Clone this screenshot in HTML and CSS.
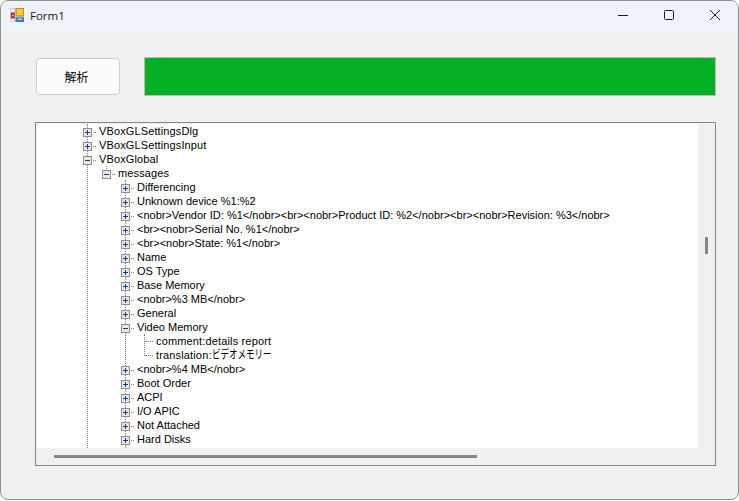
FILE: index.html
```html
<!DOCTYPE html>
<html lang="ja">
<head>
<meta charset="utf-8">
<title>Form1</title>
<link rel="stylesheet" href="styles.css">
</head>
<body>
<div class="window">
  <header class="titlebar">
    <svg class="app-icon" width="14" height="14" viewBox="0 0 15 15">
      <rect x="0" y="0" width="15" height="15" fill="#d0d0d0"/>
      <rect x="1" y="1" width="3" height="3" fill="#f4f4f4"/>
      <rect x="1" y="12" width="3" height="2" fill="#f4f4f4"/>
      <rect x="1" y="5" width="4" height="6" fill="#a81c1c"/>
      <rect x="2" y="7" width="2" height="2" fill="#f0b0a0"/>
      <rect x="6" y="0" width="9" height="9" fill="#b98a1e"/>
      <rect x="7" y="1" width="7" height="7" fill="#f6c93c"/>
      <rect x="6" y="10" width="9" height="5" fill="#3d74c6"/>
      <rect x="8" y="11" width="5" height="2" fill="#9cc2ee"/>
    </svg>
    <span class="title">Form1</span>
    <div class="caption-buttons">
      <svg width="12" height="12" viewBox="0 0 12 12"><path d="M1 6.5h10" stroke="#1a1a1a" fill="none"/></svg>
      <svg width="12" height="12" viewBox="0 0 12 12"><rect x="1.5" y="1.5" width="9" height="9" rx="1" stroke="#1a1a1a" fill="none"/></svg>
      <svg width="12" height="12" viewBox="0 0 12 12"><path d="M1 1l10 10M11 1L1 11" stroke="#1a1a1a" fill="none"/></svg>
    </div>
  </header>
  <main class="client">
    <div class="toolbar">
      <button class="analyze">解析</button>
      <div class="progress"></div>
    </div>
    <div class="treeview">
      <div class="tree-pane">
        <ul class="nodes top">
          <li><div class="row"><span class="box plus"></span><span class="dash"></span><span class="label">VBoxGLSettingsDlg</span></div></li>
          <li><div class="row"><span class="box plus"></span><span class="dash"></span><span class="label">VBoxGLSettingsInput</span></div></li>
          <li>
            <div class="row"><span class="box minus"></span><span class="dash"></span><span class="label">VBoxGlobal</span></div>
            <ul class="nodes single">
              <li>
                <div class="row"><span class="box minus"></span><span class="dash"></span><span class="label">messages</span></div>
                <ul class="nodes long">
                  <li><div class="row"><span class="box plus"></span><span class="dash"></span><span class="label">Differencing</span></div></li>
                  <li><div class="row"><span class="box plus"></span><span class="dash"></span><span class="label">Unknown device %1:%2</span></div></li>
                  <li><div class="row"><span class="box plus"></span><span class="dash"></span><span class="label">&lt;nobr&gt;Vendor ID: %1&lt;/nobr&gt;&lt;br&gt;&lt;nobr&gt;Product ID: %2&lt;/nobr&gt;&lt;br&gt;&lt;nobr&gt;Revision: %3&lt;/nobr&gt;</span></div></li>
                  <li><div class="row"><span class="box plus"></span><span class="dash"></span><span class="label">&lt;br&gt;&lt;nobr&gt;Serial No. %1&lt;/nobr&gt;</span></div></li>
                  <li><div class="row"><span class="box plus"></span><span class="dash"></span><span class="label">&lt;br&gt;&lt;nobr&gt;State: %1&lt;/nobr&gt;</span></div></li>
                  <li><div class="row"><span class="box plus"></span><span class="dash"></span><span class="label">Name</span></div></li>
                  <li><div class="row"><span class="box plus"></span><span class="dash"></span><span class="label">OS Type</span></div></li>
                  <li><div class="row"><span class="box plus"></span><span class="dash"></span><span class="label">Base Memory</span></div></li>
                  <li><div class="row"><span class="box plus"></span><span class="dash"></span><span class="label">&lt;nobr&gt;%3 MB&lt;/nobr&gt;</span></div></li>
                  <li><div class="row"><span class="box plus"></span><span class="dash"></span><span class="label">General</span></div></li>
                  <li>
                    <div class="row"><span class="box minus"></span><span class="dash"></span><span class="label">Video Memory</span></div>
                    <ul class="nodes leaves">
                      <li><div class="row"><span class="dash wide"></span><span class="label">comment:details report</span></div></li>
                      <li><div class="row"><span class="dash wide"></span><span class="label">translation:<span class="kana">ビデオメモリー</span></span></div></li>
                    </ul>
                  </li>
                  <li><div class="row"><span class="box plus"></span><span class="dash"></span><span class="label">&lt;nobr&gt;%4 MB&lt;/nobr&gt;</span></div></li>
                  <li><div class="row"><span class="box plus"></span><span class="dash"></span><span class="label">Boot Order</span></div></li>
                  <li><div class="row"><span class="box plus"></span><span class="dash"></span><span class="label">ACPI</span></div></li>
                  <li><div class="row"><span class="box plus"></span><span class="dash"></span><span class="label">I/O APIC</span></div></li>
                  <li><div class="row"><span class="box plus"></span><span class="dash"></span><span class="label">Not Attached</span></div></li>
                  <li><div class="row"><span class="box plus"></span><span class="dash"></span><span class="label">Hard Disks</span></div></li>
                </ul>
              </li>
            </ul>
          </li>
        </ul>
      </div>
      <div class="vscroll"><div class="vthumb"></div></div>
      <div class="hscroll"><div class="hthumb"></div></div>
      <div class="corner"></div>
    </div>
  </main>
</div>
</body>
</html>
```
FILE: styles.css
```css
html, body {
  margin: 0;
  padding: 0;
  width: 739px;
  height: 501px;
  overflow: hidden;
  background: #ffffff;
}
.window {
  box-sizing: border-box;
  width: 739px;
  height: 500px;
  border: 1px solid #8f8f8f;
  border-radius: 8px;
  overflow: hidden;
  background: #f0f0f0;
  display: flex;
  flex-direction: column;
}
.titlebar {
  box-sizing: border-box;
  flex: 0 0 30px;
  display: flex;
  align-items: center;
  padding: 0 0 2px 9px;
  background: #eef3fa;
  font: 11.5px "Open Sans", "Noto Sans", sans-serif;
  color: #1a1a1a;
}
.app-icon { margin-right: 6px; }
.title { flex: 1; }
.caption-buttons {
  display: flex;
  gap: 34px;
  margin-right: 17px;
}
.client {
  flex: 1;
  padding: 26px 0 0 34px;
}
.toolbar {
  display: flex;
  align-items: center;
  gap: 24px;
}
.analyze {
  box-sizing: border-box;
  width: 84px;
  height: 37px;
  margin-left: 1px;
  border: 1px solid #cccccc;
  border-radius: 4px;
  background: #fcfcfc;
  font: 12px "Noto Sans CJK JP", sans-serif;
  color: #000;
  padding: 0 3px 0 0;
}
.progress {
  box-sizing: border-box;
  width: 572px;
  height: 39px;
  border: 1px solid #bcbcbc;
  background: #06b025;
}
.treeview {
  box-sizing: border-box;
  width: 681px;
  height: 344px;
  margin-top: 26px;
  border: 1px solid #828790;
  display: grid;
  grid-template-columns: 661px 18px;
  grid-template-rows: 324px 18px;
  padding: 1px 0 0 1px;
  background: #f0f0f0;
}
.tree-pane {
  background: #fff;
  overflow: hidden;
  font: 11px "Liberation Sans", "Noto Sans CJK JP", sans-serif;
  color: #000;
  padding-left: 50px;
}
.nodes {
  list-style: none;
  margin: 0;
  padding: 0;
  position: relative;
}
.nodes::before {
  content: "";
  position: absolute;
  left: 0;
  border-left: 1px dotted #808080;
}
.top { padding-bottom: 4px; letter-spacing: 0.12px; }
.top::before { top: 0; bottom: 0; }
.single { margin-left: 19px; }
.single::before { top: 0; height: 5px; }
.long { margin-left: 19px; padding-bottom: 4px; letter-spacing: 0; }
.long::before { top: 0; bottom: 0; }
.leaves { margin-left: 19px; letter-spacing: 0.15px; }
.leaves::before { top: 0; bottom: 6px; }
.row {
  height: 14px;
  line-height: 14px;
  display: flex;
  align-items: center;
  white-space: nowrap;
  position: relative;
}
.box {
  box-sizing: border-box;
  flex: 0 0 9px;
  width: 9px;
  height: 9px;
  margin: 3px 0 0 -4px;
  border: 1px solid #8e8f8f;
  background: #e8e8e8;
  position: relative;
  z-index: 1;
}
.box::before {
  content: "";
  position: absolute;
  left: 1px;
  top: 3px;
  width: 5px;
  height: 1px;
  background: #1f3f84;
}
.plus::after {
  content: "";
  position: absolute;
  left: 3px;
  top: 1px;
  width: 1px;
  height: 5px;
  background: #1f3f84;
}
.dash {
  flex: 0 0 3px;
  width: 3px;
  margin: 2px 3px 0 1px;
  border-top: 1px dotted #808080;
}
.dash.wide {
  flex: 0 0 8px;
  width: 8px;
  margin: 1px 3px 0 1px;
}
.kana {
  display: inline-block;
  font-size: 12px;
  letter-spacing: 0;
  transform: scaleX(0.71);
  transform-origin: left center;
}
.vscroll {
  padding: 113px 0 0 7px;
}
.vthumb {
  width: 3px;
  height: 17px;
  background: #858585;
}
.hscroll {
  padding: 7px 0 0 17px;
}
.hthumb {
  width: 423px;
  height: 3px;
  background: #858585;
}
```
